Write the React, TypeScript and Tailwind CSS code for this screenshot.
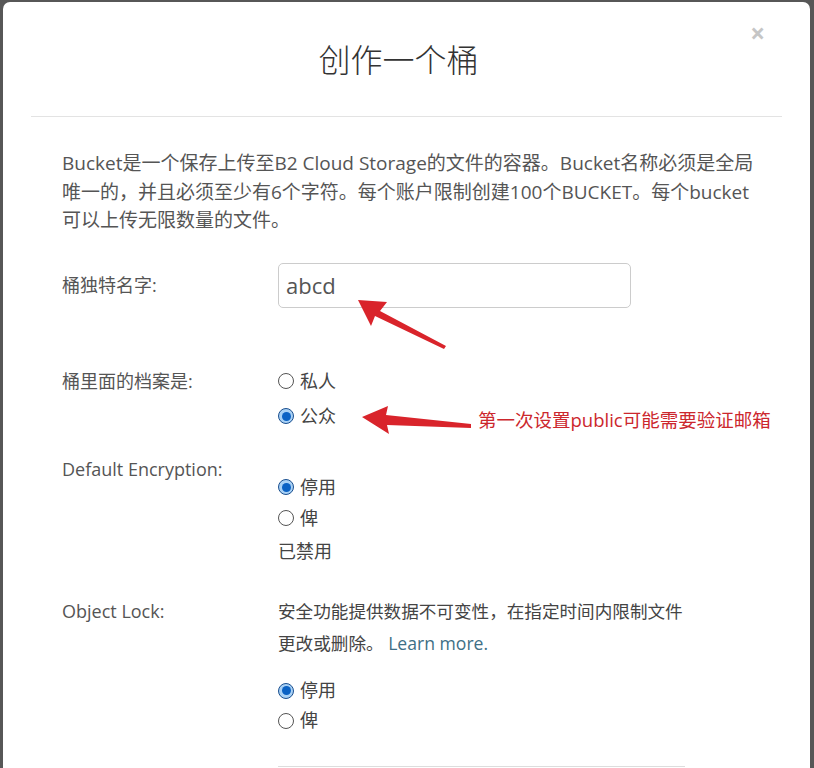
import React from "react";

const F = { fontFamily: '"Open Sans", "Noto Sans CJK SC", sans-serif' };

function Radio({ checked, label }: { checked?: boolean; label: string }) {
  return (
    <div className="flex items-center h-full">
      {checked ? (
        <span className="w-[16px] h-[16px] rounded-full border border-[#1a4f8f] bg-[#a9d1f5] flex items-center justify-center">
          <span className="w-[9px] h-[9px] rounded-full bg-[#0b62c4]" />
        </span>
      ) : (
        <span className="w-[16px] h-[16px] rounded-full border border-[#555] bg-white" />
      )}
      <span className="ml-[6px] text-[18px] text-[#444]">{label}</span>
    </div>
  );
}

export default function App() {
  return (
    <div className="min-h-screen bg-[#575757] pl-[3px] pr-[4px] pt-[2px]" style={F}>
      <div className="relative bg-white rounded-t-[7px] h-[766px] overflow-hidden">
        {/* header */}
        <div className="relative h-[114px] pt-[34px] pr-[16px] text-center">
          <h1 className="text-[32px] leading-[48px] font-light text-[#333]">创作一个桶</h1>
          <span className="absolute right-[45px] top-[15px] text-[26px] leading-[32px] font-bold text-[#c6c6c6]">×</span>
        </div>
        <div className="mx-[28px] border-t border-[#e3e3e3]" />

        {/* body */}
        <div className="px-[59px] pt-[32px] text-[#555]">
          <div className="text-[19px] leading-[28.5px] whitespace-nowrap">
            <div>Bucket是一个保存上传至B2 Cloud Storage的文件的容器。Bucket名称必须是全局</div>
            <div>唯一的，并且必须至少有6个字符。每个账户限制创建100个BUCKET。每个bucket</div>
            <div>可以上传无限数量的文件。</div>
          </div>

          {/* name */}
          <div className="mt-[28px] flex">
            <div className="w-[216px] text-[18px] leading-[45px]">桶独特名字:</div>
            <div className="w-[353px] h-[45px] border border-[#ccc] rounded-[5px] px-[7px] flex items-center text-[22px] text-[#555]">
              abcd
            </div>
          </div>

          {/* visibility */}
          <div className="mt-[56px] flex">
            <div className="w-[216px] text-[18px] leading-[35px]">桶里面的档案是:</div>
            <div className="flex flex-col">
              <div className="h-[35px]"><Radio label="私人" /></div>
              <div className="h-[35px]"><Radio checked label="公众" /></div>
            </div>
          </div>

          {/* encryption */}
          <div className="mt-[21px] flex">
            <div className="w-[216px] text-[18px] leading-[28px]">Default Encryption:</div>
            <div className="flex flex-col pt-[17px]">
              <div className="h-[31px]"><Radio checked label="停用" /></div>
              <div className="h-[31px]"><Radio label="俾" /></div>
              <div className="h-[35px] flex items-center text-[18px] text-[#444]">已禁用</div>
            </div>
          </div>

          {/* object lock */}
          <div className="mt-[26px] flex">
            <div className="w-[216px] text-[18px] leading-[32px]">Object Lock:</div>
            <div className="flex flex-col">
              <div className="text-[17.6px] leading-[32px] text-[#444]">
                <div>安全功能提供数据不可变性，在指定时间内限制文件</div>
                <div>
                  更改或删除。 <span className="text-[#3e6f86]">Learn more.</span>
                </div>
              </div>
              <div className="mt-[17px] h-[30px]"><Radio checked label="停用" /></div>
              <div className="h-[30px]"><Radio label="俾" /></div>
              <div className="mt-[30px] w-[407px] border-t border-[#ddd]" />
            </div>
          </div>
        </div>

        {/* annotation arrows */}
        <svg className="absolute left-0 top-0 pointer-events-none" width="807" height="766">
          <g fill="#d9242b">
            <polygon points="355,298 384,300 377,309 443,344 441,347 372,314 368,324" />
            <polygon points="359,415 385,404 383,413 468,422 468,426 384,423 386,432" />
          </g>
        </svg>
        <div className="absolute left-[475px] top-[405px] text-[18.5px] leading-[26px] text-[#cc272d] whitespace-nowrap">
          第一次设置public可能需要验证邮箱
        </div>
      </div>
    </div>
  );
}
